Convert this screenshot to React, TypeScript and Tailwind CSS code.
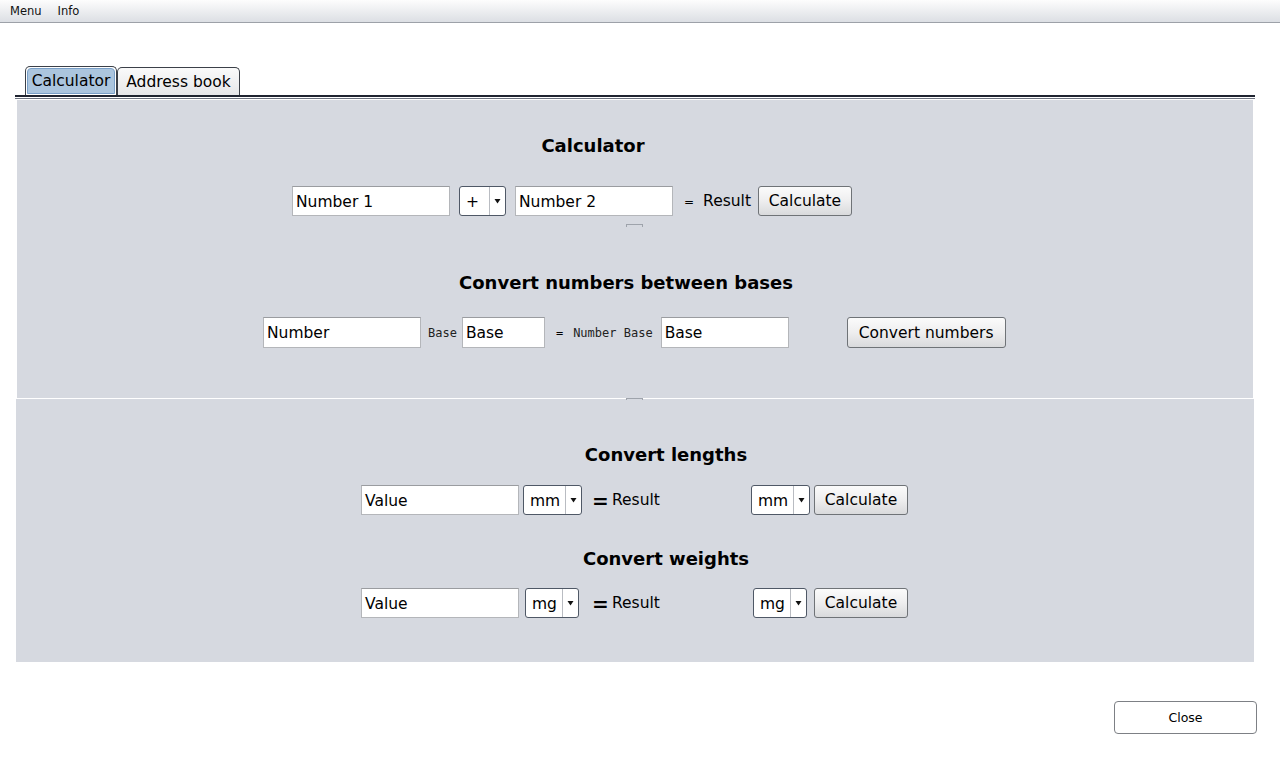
import React from "react";

const inputCls =
  "h-[30px] bg-white border border-[#b4b6ba] border-t-[#9a9ca0] px-[3px] pt-[3px] flex items-center text-[15.5px] text-black leading-none";
const btnCls =
  "h-[30px] rounded-[3px] border border-[#6f7377] bg-linear-to-b from-[#fbfbfb] via-[#eeeeef] to-[#d9dadc] pt-[2px] flex items-center justify-center text-[15.5px] text-black leading-none";

function Combo({ label, w, ml }: { label: string; w: string; ml: string }) {
  return (
    <div
      className={`${w} ${ml} h-[30px] rounded-[3px] border border-[#4f5866] bg-white flex items-stretch text-[15.5px] text-black leading-none`}
    >
      <div className="flex-1 flex items-center pl-[6px] pt-[3px]">{label}</div>
      <div className="w-[16px] border-l border-[#b9bcc2] flex items-center justify-center">
        <svg width="7" height="6" viewBox="0 0 7 6">
          <path d="M0.5 1 L6.5 1 L3.5 5.5 Z" fill="#111" />
        </svg>
      </div>
    </div>
  );
}

function Heading({ text, ml, w }: { text: string; ml: string; w: string }) {
  return (
    <div className={`${ml} ${w} text-center font-bold text-[18px] leading-[22px] text-black`}>
      {text}
    </div>
  );
}

export default function App() {
  return (
    <div className="w-[1280px] h-[778px] bg-white font-['DejaVu_Sans',sans-serif] text-black overflow-hidden">
      {/* menu bar */}
      <div className="h-[23px] bg-linear-to-b from-[#fdfdfd] to-[#dcdfe4] border-b border-[#9da1a8] flex items-center pt-[1px] text-[11.5px] text-[#111]">
        <span className="ml-[10px]">Menu</span>
        <span className="ml-[16px]">Info</span>
      </div>

      {/* tabs */}
      <div className="mt-[43px] ml-[15px] w-[1240px]">
        <div className="flex items-end pl-[10px] h-[29px]">
          <div className="h-[29px] w-[92px] rounded-t-[5px] border border-[#3b4048] border-b-0 p-[1px] bg-white">
            <div className="h-full w-full rounded-t-[4px] border border-[#7aa0c8] bg-[#abc5de] pt-[2px] flex items-center justify-center text-[15.5px] leading-none">
              Calculator
            </div>
          </div>
          <div className="h-[28px] w-[123px] rounded-t-[5px] border border-[#3b4048] border-b-0 bg-linear-to-b from-[#fafafa] to-[#e6e7e9] pt-[2px] flex items-center justify-center text-[15.5px] leading-none">
            Address book
          </div>
        </div>
        <div className="h-[2px] bg-[#1f2430]" />
        <div className="h-[1px] bg-white" />
        <div className="h-[1px] bg-[#6d7380]" />
      </div>

      {/* panel 1 */}
      <div className="mt-[1px] ml-[17px] w-[1236px] h-[298px] bg-[#d6d9e0] pt-[35px] flex flex-col">
        <Heading text="Calculator" ml="ml-[376px]" w="w-[400px]" />
        <div className="mt-[29px] flex items-center">
          <div className={`${inputCls} ml-[275px] w-[158px]`}>Number 1</div>
          <Combo label="+" w="w-[47px]" ml="ml-[9px]" />
          <div className={`${inputCls} ml-[9px] w-[158px]`}>Number 2</div>
          <span className="ml-[11px] text-[12px] pt-[2px]">=</span>
          <span className="ml-[9px] text-[15.5px] pt-[2px]">Result</span>
          <div className={`${btnCls} ml-[7px] w-[94px]`}>Calculate</div>
        </div>
        <div className="mt-[8px] ml-[609px] w-[17px] h-[3px] border-t border-x border-[#9ea3ab]" />
        <div className="mt-[45px]">
          <Heading text="Convert numbers between bases" ml="ml-[309px]" w="w-[600px]" />
        </div>
        <div className="mt-[23px] flex items-center">
          <div className={`${inputCls} ml-[246px] w-[158px] h-[31px]`}>Number</div>
          <span className="ml-[7px] text-[12px] font-['DejaVu_Sans_Mono',monospace] text-[#222]">Base</span>
          <div className={`${inputCls} ml-[5px] w-[83px] h-[31px]`}>Base</div>
          <span className="ml-[11px] text-[12px] font-['DejaVu_Sans_Mono',monospace]">=</span>
          <span className="ml-[10px] text-[12px] font-['DejaVu_Sans_Mono',monospace] text-[#222]">Number Base</span>
          <div className={`${inputCls} ml-[8px] w-[128px] h-[31px]`}>Base</div>
          <div className={`${btnCls} ml-[58px] w-[159px] h-[31px]`}>Convert numbers</div>
        </div>
      </div>

      {/* panel 2 */}
      <div className="mt-[1px] ml-[16px] w-[1238px] h-[263px] bg-[#d6d9e0] relative pt-[45px] flex flex-col">
        <div className="absolute left-[610px] top-[-1px] w-[17px] h-[2px] border-t border-x border-[#9ea3ab]" />
        <Heading text="Convert lengths" ml="ml-[450px]" w="w-[400px]" />
        <div className="mt-[19px] flex items-center">
          <div className={`${inputCls} ml-[345px] w-[158px]`}>Value</div>
          <Combo label="mm" w="w-[59px]" ml="ml-[4px]" />
          <span className="ml-[10px] font-bold text-[20px] leading-none w-[13px] pt-[2px]">=</span>
          <span className="ml-[7px] w-[139px] text-[15.5px] pt-[2px]">Result</span>
          <Combo label="mm" w="w-[59px]" ml="ml-0" />
          <div className={`${btnCls} ml-[4px] w-[94px]`}>Calculate</div>
        </div>
        <div className="mt-[33px]">
          <Heading text="Convert weights" ml="ml-[450px]" w="w-[400px]" />
        </div>
        <div className="mt-[18px] flex items-center">
          <div className={`${inputCls} ml-[345px] w-[158px]`}>Value</div>
          <Combo label="mg" w="w-[54px]" ml="ml-[6px]" />
          <span className="ml-[13px] font-bold text-[20px] leading-none w-[13px] pt-[2px]">=</span>
          <span className="ml-[7px] w-[141px] text-[15.5px] pt-[2px]">Result</span>
          <Combo label="mg" w="w-[54px]" ml="ml-0" />
          <div className={`${btnCls} ml-[7px] w-[94px]`}>Calculate</div>
        </div>
      </div>

      {/* close */}
      <div className="mt-[39px] ml-[1114px] w-[143px] h-[33px] rounded-[4px] border border-[#7d8085] bg-white pt-[1px] flex items-center justify-center text-[12.5px]">
        Close
      </div>
    </div>
  );
}
